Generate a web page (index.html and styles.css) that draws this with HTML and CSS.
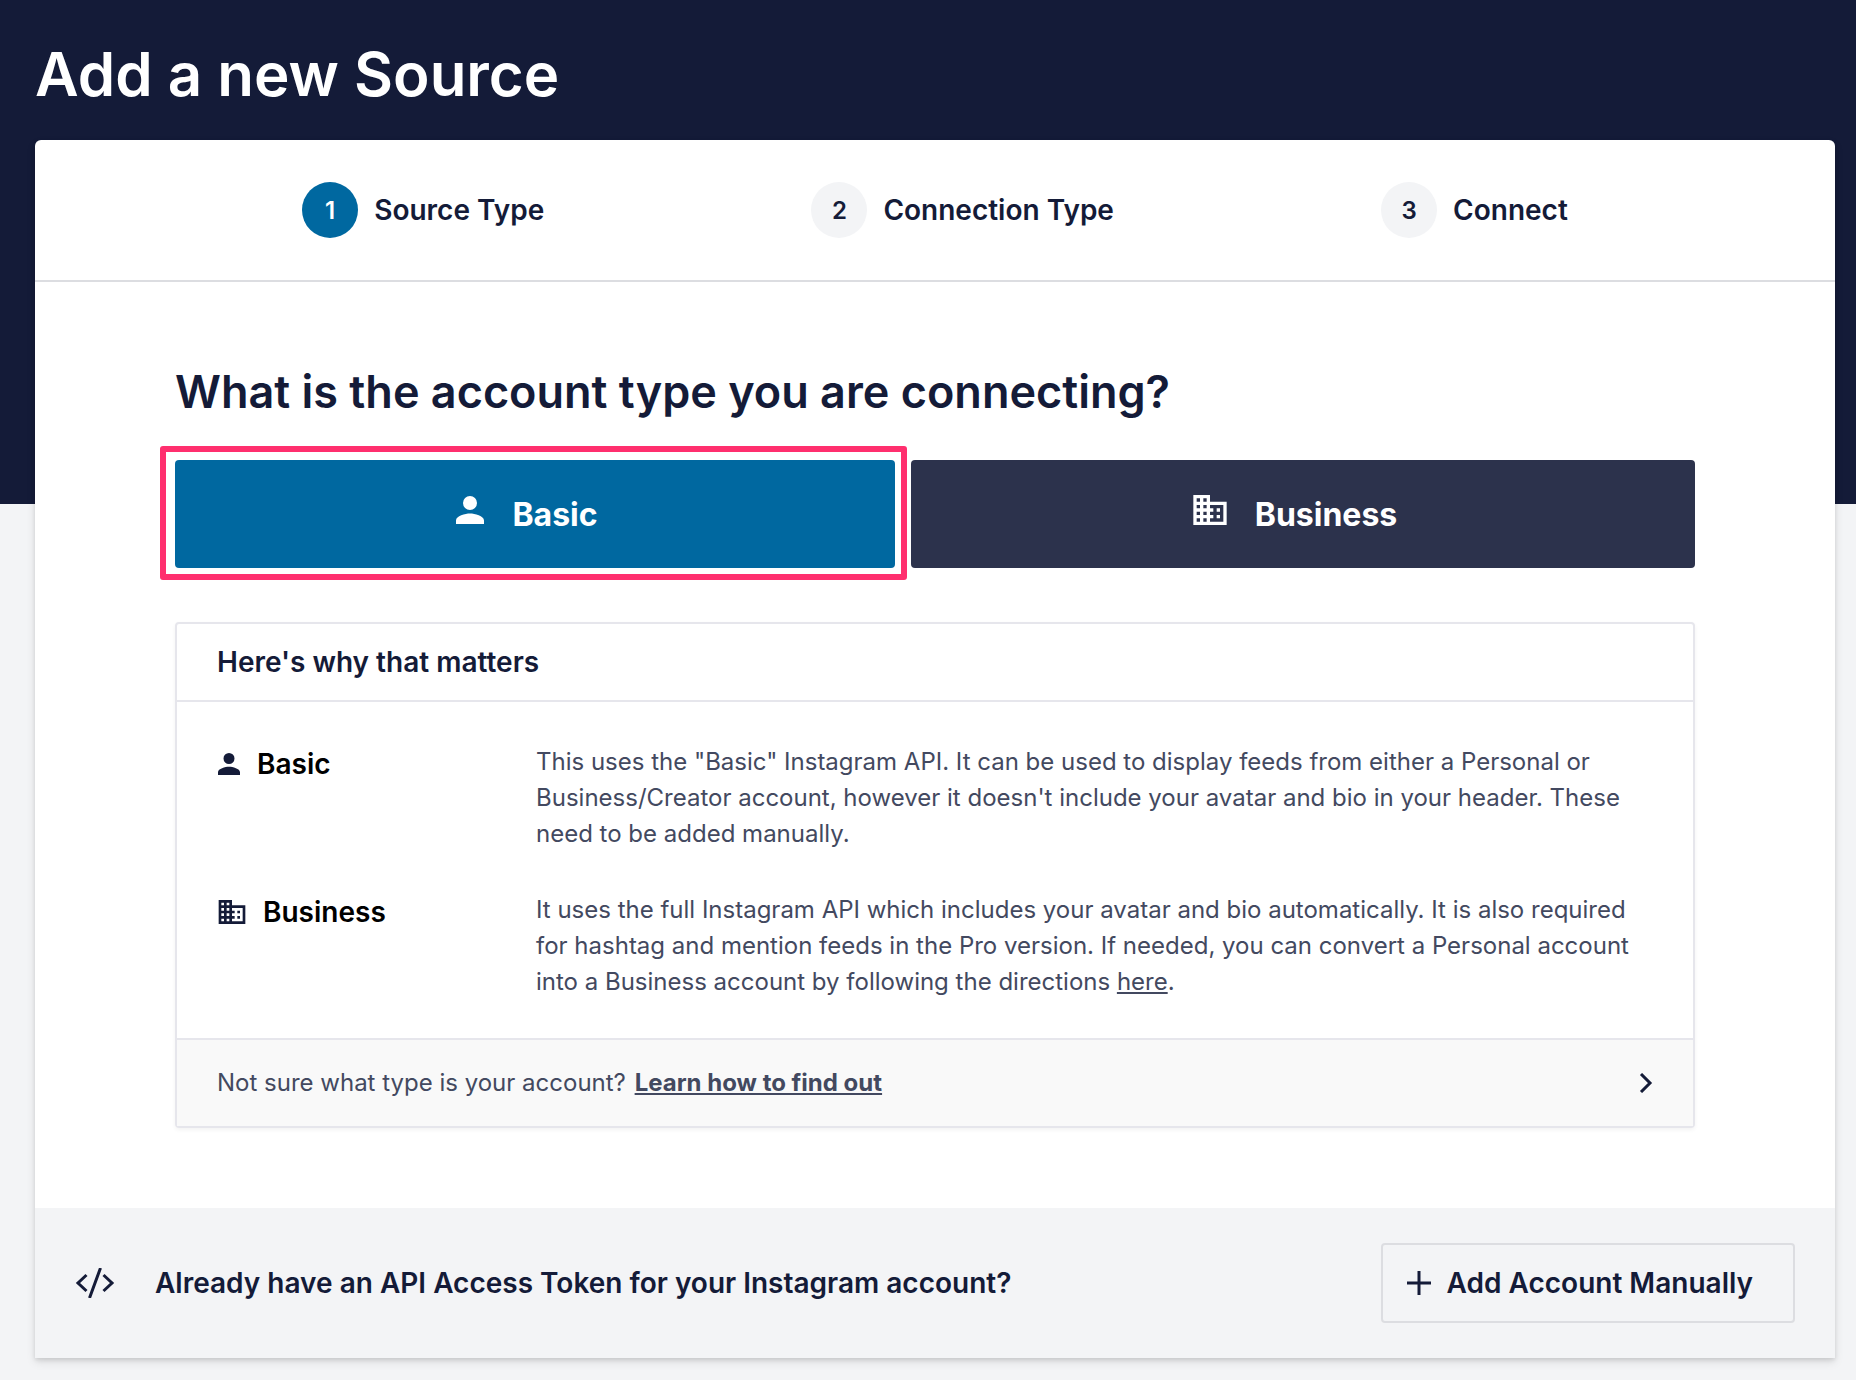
FILE: index.html
```html
<!DOCTYPE html>
<html lang="en">
<head>
<meta charset="utf-8">
<meta name="viewport" content="width=device-width, initial-scale=1">
<title>Add a new Source</title>
<link rel="stylesheet" href="styles.css">
</head>
<body>
<svg class="sprite" aria-hidden="true">
  <symbol id="icon-person" viewBox="0 0 16 16"><path d="M8 8a4 4 0 1 0 0-8 4 4 0 0 0 0 8zm0 2c-2.670 0-8 1.340-8 4v2h16v-2c0-2.660-5.330-4-8-4z"/></symbol>
  <symbol id="icon-building" viewBox="0 0 20 18"><path d="M10 4V0H0v18h20V4H10zM4 16H2v-2h2v2zm0-4H2v-2h2v2zm0-4H2V6h2v2zm0-4H2V2h2v2zm4 12H6v-2h2v2zm0-4H6v-2h2v2zm0-4H6V6h2v2zm0-4H6V2h2v2zm10 12h-8v-2h2v-2h-2v-2h2V8h-2V6h8v10zm-2-8h-2v2h2V8zm0 4h-2v2h2v-2z"/></symbol>
</svg>
<main class="page">
  <h1 class="page-title">Add a new Source</h1>
  <section class="card">
    <ol class="steps">
      <li class="step step-active"><span class="step-number">1</span>Source Type</li>
      <li class="step"><span class="step-number">2</span>Connection Type</li>
      <li class="step"><span class="step-number">3</span>Connect</li>
    </ol>
    <div class="content">
      <h2 class="question">What is the account type you are connecting?</h2>
      <div class="choices">
        <div class="choice-wrap choice-wrap-basic">
          <button type="button" class="choice choice-basic"><svg class="choice-icon choice-icon-person"><use href="#icon-person"/></svg>Basic</button>
        </div>
        <div class="choice-wrap choice-wrap-business">
          <button type="button" class="choice choice-business"><svg class="choice-icon choice-icon-building"><use href="#icon-building"/></svg>Business</button>
        </div>
      </div>
      <section class="info">
        <h3 class="info-title">Here's why that matters</h3>
        <dl class="info-list">
          <dt class="info-term"><svg class="term-icon-person"><use href="#icon-person"/></svg>Basic</dt>
          <dd class="info-text">This uses the "Basic" Instagram API. It can be used to display feeds from either a Personal or Business/Creator account, however it doesn't include your avatar and bio in your header. These need to be added manually.</dd>
          <dt class="info-term"><svg class="term-icon-building"><use href="#icon-building"/></svg>Business</dt>
          <dd class="info-text">It uses the full Instagram API which includes your avatar and bio automatically. It is also required for hashtag and mention feeds in the Pro version. If needed, you can convert a Personal account into a Business account by following the directions <a href="#">here</a>.</dd>
        </dl>
        <div class="info-footer">
          <p class="info-help">Not sure what type is your account? <a class="info-learn" href="#">Learn how to find out</a></p>
          <svg class="chevron" viewBox="0 0 14 20"><path d="M2 1l9 9-9 9"/></svg>
        </div>
      </section>
    </div>
    <footer class="manual">
      <svg class="code-icon" viewBox="0 0 38 30"><path d="M10.500 7L2 15l8.500 8M27.500 7l8.500 8-8.500 8M24.500 0l-11 30"/></svg>
      <p class="manual-text">Already have an API Access Token for your Instagram account?</p>
      <button type="button" class="add-button"><svg class="plus" viewBox="0 0 24 24"><path d="M12 0v24M0 12h24"/></svg>Add Account Manually</button>
    </footer>
  </section>
</main>
</body>
</html>
```

FILE: styles.css
```css
* {
  box-sizing: border-box;
}

body {
  margin: 0;
  background: #f3f4f6 linear-gradient(#141b38, #141b38) 0 0 / 100% 504px no-repeat;
  color: #141b38;
  font-family: Inter, "Liberation Sans", sans-serif;
  font-size: 28px;
  font-weight: 600;
}

h1, h2, h3, p, ol, dl, dd {
  margin: 0;
  padding: 0;
}

button {
  font: inherit;
  color: inherit;
  cursor: pointer;
}

svg {
  flex: none;
  fill: currentColor;
}

.sprite {
  position: absolute;
  width: 0;
  height: 0;
}

.page {
  padding: 36px 21px 22px 35px;
}

.page-title {
  margin-bottom: 28px;
  color: #fff;
  font-size: 60px;
  line-height: 76px;
  font-weight: 600;
}

.card {
  background: #fff;
  border-radius: 6px 6px 0 0;
  box-shadow: 0 4px 10px rgba(0, 0, 0, 0.1), 0 2px 4px rgba(0, 0, 0, 0.1);
}

.steps {
  display: flex;
  justify-content: space-evenly;
  align-items: center;
  height: 142px;
  border-bottom: 2px solid #dcdde1;
  list-style: none;
}

.step {
  display: flex;
  align-items: center;
  gap: 16px;
}

.step-number {
  display: grid;
  place-items: center;
  width: 56px;
  height: 56px;
  border-radius: 50%;
  background: #f3f4f6;
  font-size: 24px;
}

.step-active .step-number {
  background: #0068a0;
  color: #fff;
}

.content {
  padding: 80px 140px;
}

.question {
  margin-bottom: 38px;
  font-size: 45px;
  line-height: 60px;
  font-weight: 600;
}

.choices {
  display: grid;
  grid-template-columns: 720fr 784fr;
  gap: 16px;
  margin-bottom: 54px;
}

.choice-wrap {
  position: relative;
}

.choice-wrap-basic::after {
  content: "";
  position: absolute;
  inset: -14px -12px -12px -15px;
  border: 6px solid #ff2f6e;
  border-radius: 3px;
  pointer-events: none;
}

.choice {
  display: flex;
  justify-content: center;
  align-items: center;
  gap: 28px;
  width: 100%;
  height: 108px;
  padding: 0 16px 0 0;
  border: 0;
  border-radius: 4px;
  color: #fff;
  font-size: 32px;
  font-weight: 700;
}

.choice-basic {
  background: #0068a0;
}

.choice-business {
  background: #2c324c;
}

.choice-icon {
  margin-bottom: 8px;
}

.choice-icon-person {
  width: 28px;
  height: 28px;
}

.choice-icon-building {
  width: 34px;
  height: 30px;
}

.info {
  border: 2px solid #e6e6ec;
  border-radius: 4px;
  box-shadow: 0 2px 4px rgba(0, 0, 0, 0.05);
}

.info-title {
  padding: 20px 40px;
  border-bottom: 2px solid #e6e6ec;
  font-size: 28px;
  line-height: 36px;
  font-weight: 600;
}

.info-list {
  display: grid;
  grid-template-columns: 319px 1fr;
  row-gap: 40px;
  padding: 42px 60px 38px 40px;
}

.info-term {
  display: flex;
  align-items: center;
  gap: 16px;
  height: 40px;
  color: #000;
}

.info-term svg {
  fill: #141b38;
}

.term-icon-person {
  width: 24px;
  height: 22px;
}

.term-icon-building {
  width: 30px;
  height: 24px;
}

.info-text,
.info-help {
  color: #434960;
  font-size: 24px;
  line-height: 36px;
  font-weight: 400;
}

a {
  color: inherit;
}

.info-footer {
  display: flex;
  justify-content: space-between;
  align-items: center;
  height: 88px;
  padding: 0 40px;
  border-top: 2px solid #e6e6ec;
  background: #f9f9f9;
}

.info-learn {
  margin-left: 2px;
  font-weight: 700;
}

.chevron {
  width: 14px;
  height: 20px;
  fill: none;
  stroke: #141b38;
  stroke-width: 3;
}

.manual {
  display: flex;
  align-items: center;
  height: 150px;
  padding: 0 40px;
  background: #f3f4f6;
}

.code-icon {
  width: 40px;
  height: 30px;
  margin-right: 40px;
  fill: none;
  stroke: currentColor;
  stroke-width: 3;
}

.add-button {
  display: flex;
  align-items: center;
  gap: 16px;
  height: 80px;
  margin-left: auto;
  padding: 0 40px 0 24px;
  border: 2px solid #dcdde1;
  border-radius: 4px;
  background: transparent;
}

.plus {
  width: 24px;
  height: 24px;
  stroke: currentColor;
  stroke-width: 3;
}
```
